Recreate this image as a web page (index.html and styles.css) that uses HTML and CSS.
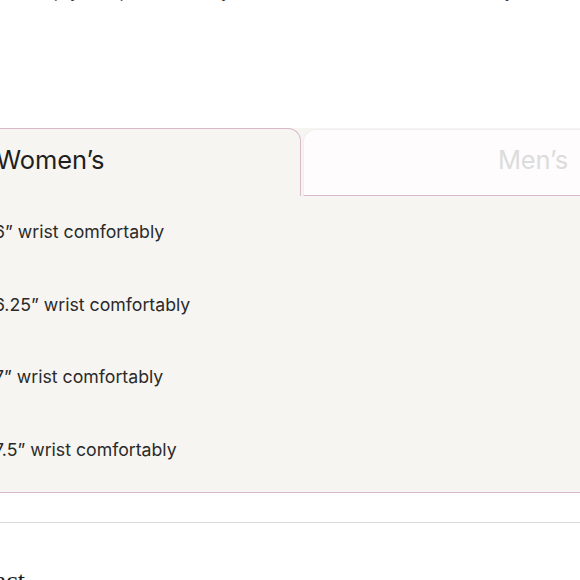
FILE: index.html
```html
<!DOCTYPE html>
<html lang="en">
<head>
<meta charset="utf-8">
<link rel="stylesheet" href="styles.css">
</head>
<body>
<div class="page">
  <p class="intro">Simply wrap it around your wrist to measure accurately.</p>
  <section class="sizes">
    <div class="tabs">
      <div class="tab tab-active">Women’s</div>
      <div class="tab tab-idle">Men’s</div>
    </div>
    <ul class="rows">
      <li>6” wrist comfortably</li>
      <li>6.25” wrist comfortably</li>
      <li>7” wrist comfortably</li>
      <li>7.5” wrist comfortably</li>
    </ul>
  </section>
  <hr class="rule">
  <h2 class="contact">Contact</h2>
</div>
</body>
</html>
```
FILE: styles.css
```css
html, body {
  margin: 0;
  padding: 0;
  background: #ffffff;
  overflow: hidden;
  height: 580px;
}
.page {
  width: 620px;
  margin-left: -20px;
  font-family: Inter, "Noto Sans", sans-serif;
  color: #222222;
}
.intro {
  margin: -22px 0 0 0;
  padding-left: 40px;
  font-size: 19px;
  line-height: 26px;
  color: #333;
  white-space: nowrap;
}
.sizes {
  margin-top: 124px;
  background: #f7f5f1;
  border-bottom: 1.5px solid #d8b9cc;
}
.tabs {
  display: flex;
  height: 68px;
}
.tab {
  box-sizing: border-box;
  height: 68px;
  display: flex;
  align-items: center;
  font-size: 25.5px;
  letter-spacing: -0.1px;
}
.tab-active {
  width: 321px;
  padding-left: 16px;
  padding-bottom: 6px;
  border-top: 1.5px solid #d8b9cc;
  border-right: 1.5px solid #d8b9cc;
  border-top-right-radius: 13px;
  color: #1f1f1f;
}
.tab-idle {
  flex: 1;
  margin-left: 2px;
  margin-top: 1px;
  height: 67px;
  justify-content: flex-end;
  padding-right: 33px;
  padding-bottom: 6px;
  background: #fefcfd;
  border-top: 1px solid #f1eef0;
  border-left: 1px solid #f1eef0;
  border-bottom: 1.5px solid #d8b9cc;
  border-top-left-radius: 13px;
  color: #dcdcdc;
  margin-right: -1px;
}
.rows {
  list-style: none;
  margin: 0;
  padding: 0 0 6px 14px;
}
.rows li {
  height: 72.5px;
  display: flex;
  align-items: center;
  padding-bottom: 1px;
  box-sizing: border-box;
  font-size: 17.7px;
  color: #2a2a2a;
}
.rule {
  margin: 29px 0 0 0;
  border: 0;
  border-top: 1.5px solid #dcdcdc;
}
.contact {
  margin: 43px 0 0 -36px;
  font-family: "Liberation Serif", serif;
  font-size: 26px;
  font-weight: 400;
  color: #1a1a1a;
}
```
